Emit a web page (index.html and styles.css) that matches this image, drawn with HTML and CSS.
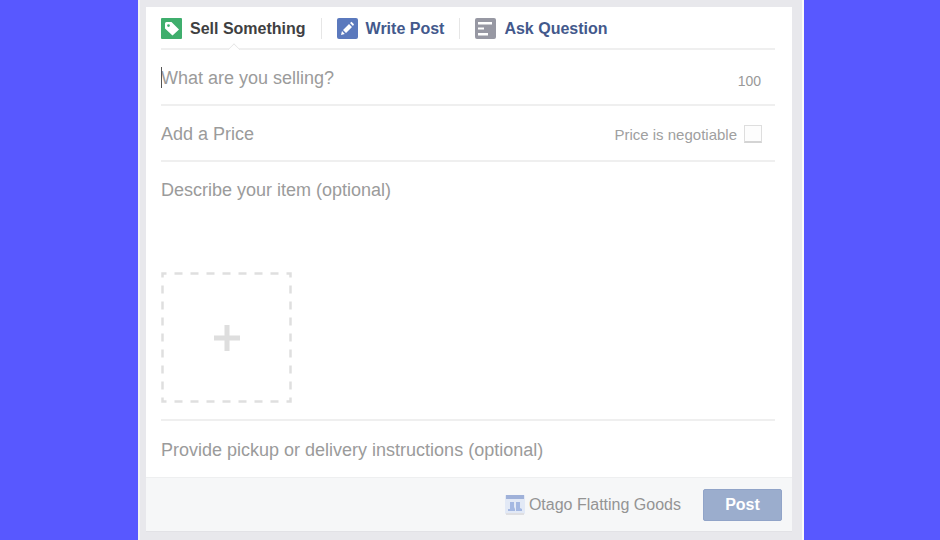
FILE: index.html
```html
<!DOCTYPE html>
<html lang="en">
<head>
    <meta charset="UTF-8">
    <meta name="viewport" content="width=device-width, initial-scale=1.0">
    <title>Sell Something</title>
    <link rel="stylesheet" href="styles.css">
</head>
<body>
    <main class="panel">
        <form class="composer" onsubmit="event.preventDefault()">
            <div class="content">
                <nav class="tabs">
                    <button type="button" class="tab active">
                        <svg class="tab-icon" viewBox="0 0 21 21">
                            <rect width="21" height="21" rx="1" fill="#3fae6d"/>
                            <path fill="#fff" fill-rule="evenodd" d="M4 5.500Q4 4 5.500 4H10.500L18 11.500L11.500 17.500L4 10.500ZM7.500 6.200A1.400 1.400 0 1 0 7.500 9A1.400 1.400 0 1 0 7.500 6.200Z"/>
                        </svg>
                        Sell Something
                    </button>
                    <button type="button" class="tab">
                        <svg class="tab-icon" viewBox="0 0 21 21">
                            <rect width="21" height="21" rx="2" fill="#5b79bd"/>
                            <path fill="#fff" d="M4 17L5 13L7.800 16ZM6 12L12 6L15 9L9 15ZM13 5L14.500 3.800L17 6.300L16 8Z"/>
                        </svg>
                        Write Post
                    </button>
                    <button type="button" class="tab">
                        <svg class="tab-icon" viewBox="0 0 21 21">
                            <rect width="21" height="21" rx="2" fill="#9798a3"/>
                            <path fill="#fff" d="M3 4H17V6.500H3ZM3 9.500H9V11.500H3ZM3 15H13V17.500H3Z"/>
                        </svg>
                        Ask Question
                    </button>
                </nav>
                <div class="row title-row">
                    <span class="caret"></span>
                    <input type="text" class="field" placeholder="What are you selling?" aria-label="What are you selling?" maxlength="100">
                    <span class="count">100</span>
                </div>
                <div class="row">
                    <input type="text" class="field" placeholder="Add a Price" aria-label="Add a Price">
                    <label class="negotiable" for="negotiable">Price is negotiable</label>
                    <input type="checkbox" class="check" id="negotiable">
                </div>
                <div class="details">
                    <textarea class="field" placeholder="Describe your item (optional)" aria-label="Describe your item (optional)"></textarea>
                    <button type="button" class="add-photo" aria-label="Add photo">
                        <svg viewBox="0 0 131 131">
                            <rect x="1.500" y="1.500" width="128" height="128" fill="none" stroke="#dfdfdf" stroke-width="2.500" stroke-dasharray="8 8" stroke-dashoffset="4"/>
                            <path d="M53 66H79M66 53V79" stroke="#dedede" stroke-width="5"/>
                        </svg>
                    </button>
                </div>
                <div class="row pickup">
                    <input type="text" class="field" placeholder="Provide pickup or delivery instructions (optional)" aria-label="Provide pickup or delivery instructions (optional)">
                </div>
            </div>
            <footer class="footer">
                <svg class="group-icon" viewBox="0 0 20 20">
                    <rect width="20" height="19" rx="1" fill="#e2e9f6"/>
                    <path fill="#9fb1d9" d="M1 0H19V4H1Z"/>
                    <path fill="#a4b8e2" d="M5 7H9V12L10 14V16H3V14H5ZM11 7H15V13L17 14V16H11Z"/>
                    <path fill="#dfdfe2" d="M1 18H19V20H1Z"/>
                </svg>
                <span class="group-name">Otago Flatting Goods</span>
                <button type="submit" class="post">Post</button>
            </footer>
        </form>
    </main>
</body>
</html>
```

FILE: styles.css
```css
* { box-sizing: border-box; }
body {
    margin: 0;
    padding: 0 136px 0 138px;
    background-color: #5858ff;
    font-family: "Liberation Sans", Arial, sans-serif;
}
button, input, textarea {
    font-family: inherit;
    margin: 0;
    padding: 0;
    border: 0;
    background: none;
}
.panel {
    min-height: 100vh;
    padding: 7px 10px 9px 6px;
    background-color: #e8e8ec;
    border-left: 2px solid #f3f3f3;
    border-right: 2px solid #fafafa;
}
.composer { background-color: #fff; }
.content { padding: 0 17px 0 15px; }

/* Tabs */
.tabs {
    display: flex;
    align-items: center;
    height: 43px;
    padding-top: 2px;
    border-bottom: 2px solid #efefef;
}
.tab {
    position: relative;
    display: flex;
    align-items: center;
    gap: 8px;
    height: 21px;
    font-size: 16px;
    font-weight: bold;
    color: #43598c;
    white-space: nowrap;
    cursor: pointer;
}
.tab + .tab {
    margin-left: 15px;
    padding-left: 15px;
    border-left: 1px solid #e6e6e6;
}
.tab.active { color: #3f3f42; }
.tab.active::after {
    content: "";
    position: absolute;
    left: 50%;
    top: 27px;
    width: 9px;
    height: 9px;
    margin-left: -4px;
    background-color: #fff;
    border: solid #e6e6e6;
    border-width: 1px 0 0 1px;
    transform: rotate(45deg);
    clip-path: polygon(0 0, 100% 0, 0 100%);
}
.tab-icon { width: 21px; height: 21px; }

/* Form rows */
.row {
    position: relative;
    display: flex;
    align-items: center;
    height: 56px;
    padding-top: 2px;
    border-bottom: 2px solid #efefef;
}
.field {
    flex: 1;
    min-width: 0;
    height: 24px;
    font-size: 18px;
    line-height: 24px;
    color: #444;
    outline: none;
}
.field::placeholder { color: #9b9b9b; opacity: 1; }
.caret {
    position: absolute;
    left: 0;
    top: 17px;
    width: 1px;
    height: 21px;
    background-color: #555;
}
.count {
    margin: 6px 14px 0 0;
    font-size: 14px;
    color: #999;
}
.negotiable { font-size: 15px; color: #a0a0a0; }
.check {
    appearance: none;
    width: 18px;
    height: 18px;
    margin: 0 13px 0 7px;
    background-color: #fdfdfd;
    border: 1px solid #dedede;
    border-bottom: 2px solid #d4d4d4;
}
.check:checked { background-color: #9badcd; }
.details {
    padding: 16px 0;
    border-bottom: 2px solid #efefef;
}
.details .field {
    display: block;
    width: 100%;
    height: 94px;
    resize: none;
}
.add-photo {
    display: block;
    width: 131px;
    height: 131px;
    cursor: pointer;
}
.add-photo svg { display: block; }
.pickup { border-bottom: 0; }

/* Footer */
.footer {
    display: flex;
    align-items: center;
    justify-content: flex-end;
    height: 55px;
    padding: 0 10px;
    background-color: #f6f7f8;
    border-top: 1px solid #eeeff0;
    border-bottom: 1px solid #e2e2e6;
}
.group-icon { width: 20px; height: 20px; }
.group-name {
    margin: 0 22px 0 4px;
    font-size: 16px;
    color: #949494;
}
.post {
    width: 79px;
    height: 32px;
    font-size: 16px;
    font-weight: bold;
    color: #fff;
    background-color: #9badcd;
    border: 1px solid #91a4c8;
    border-radius: 2px;
    cursor: pointer;
}
```
